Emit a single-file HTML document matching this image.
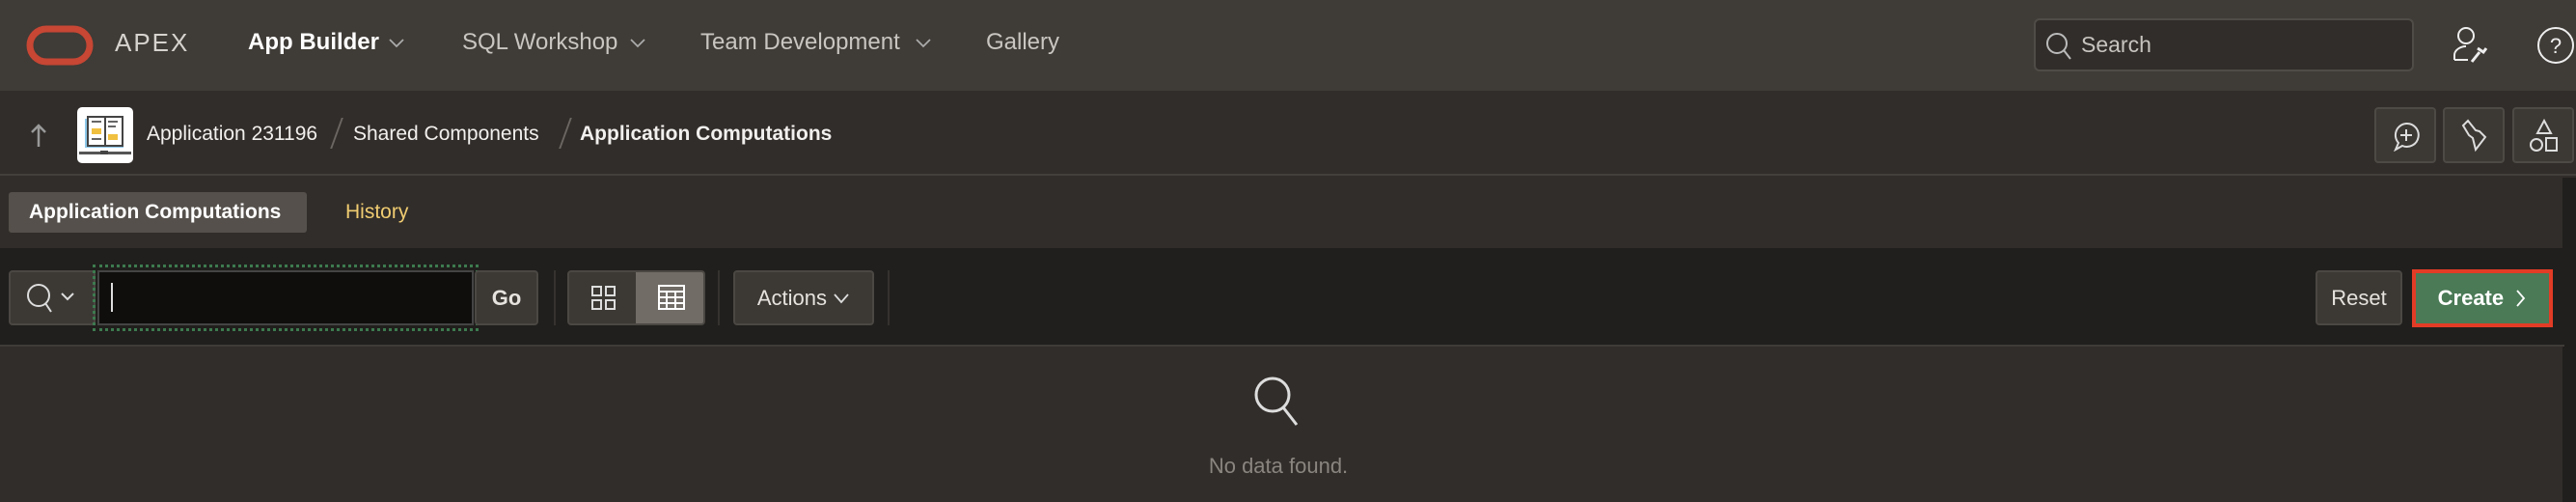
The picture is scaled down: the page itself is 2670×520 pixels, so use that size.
<!DOCTYPE html>
<html><head><meta charset="utf-8"><style>
*{box-sizing:border-box;margin:0;padding:0}
body{width:2670px;height:520px;overflow:hidden;background:#312d2a;font-family:"Liberation Sans",sans-serif;position:relative}
.a{position:absolute}
.top{left:0;top:0;width:2670px;height:94px;background:#3f3b36}
.nav{top:30px;font-size:24px;color:#c9c5c0;white-space:nowrap}
.chev{top:36px}
.bc{left:0;top:94px;width:2670px;height:88px;background:#312d2a;border-bottom:2px solid #433f3b}
.bct{top:127px;font-size:21px;color:#f2f0ee;white-space:nowrap}
.slash{top:122px;width:2px;height:32px;background:#6b6661;transform:skewX(-20deg)}
.ib{width:64px;height:58px;top:111px;border:2px solid #4d4944;border-radius:4px;background:#3c3834}
.tb{left:0;top:257px;width:2658px;height:102px;background:#201f1d;border-bottom:2px solid #3f3b37}
.btn{top:280px;height:57px;background:#3c3935;border:2px solid #4b4743;border-radius:4px;color:#e6e3df;font-size:22px;display:flex;align-items:center;justify-content:center}
.sep{top:280px;width:2px;height:57px;background:#35322f}
</style></head><body>
<div class="a top"></div>
<svg class="a" style="left:27px;top:26px" width="70" height="42"><rect x="4" y="4" width="62" height="34" rx="17" fill="none" stroke="#c74634" stroke-width="7"/></svg>
<div class="a nav" style="left:119px;color:#d6d3cf;font-size:26px;letter-spacing:2px;top:29px">APEX</div>
<div class="a nav" style="left:257px;color:#fff;font-weight:bold">App Builder</div>
<svg class="a chev" style="left:402px" width="18" height="18"><path d="M2 5l7 7 7-7" fill="none" stroke="#aaa" stroke-width="1.8"/></svg>
<div class="a nav" style="left:479px">SQL Workshop</div>
<svg class="a chev" style="left:652px" width="18" height="18"><path d="M2 5l7 7 7-7" fill="none" stroke="#aaa" stroke-width="1.8"/></svg>
<div class="a nav" style="left:726px">Team Development</div>
<svg class="a chev" style="left:948px" width="18" height="18"><path d="M2 5l7 7 7-7" fill="none" stroke="#aaa" stroke-width="1.8"/></svg>
<div class="a nav" style="left:1022px">Gallery</div>
<div class="a" style="left:2108px;top:19px;width:394px;height:55px;background:#312d2a;border:2px solid #4f4b46;border-radius:6px"></div>
<svg class="a" style="left:2118px;top:31px" width="34" height="34"><circle cx="14" cy="14" r="10" fill="none" stroke="#bbb" stroke-width="2"/><path d="M21 21l7 9" stroke="#bbb" stroke-width="2"/></svg>
<div class="a" style="left:2157px;top:33px;font-size:23px;color:#c7c3bf">Search</div>
<svg class="a" style="left:2540px;top:26px" width="40" height="40"><circle cx="16" cy="11" r="8" fill="none" stroke="#eee" stroke-width="2"/><path d="M4 36v-5c0-5 6-9 12-9M4 36h14" fill="none" stroke="#eee" stroke-width="2"/><path d="M22 38l8-10M28 24l6 4 3-4" fill="none" stroke="#eee" stroke-width="3"/></svg>
<svg class="a" style="left:2628px;top:26px" width="42" height="42"><circle cx="21" cy="21" r="18" fill="none" stroke="#eee" stroke-width="2"/><text x="21" y="29" font-size="22" fill="#eee" text-anchor="middle" font-family="Liberation Sans">?</text></svg>

<div class="a bc"></div>
<svg class="a" style="left:30px;top:126px" width="20" height="28"><path d="M10 26V4M3 11l7-7 7 7" fill="none" stroke="#999" stroke-width="2.5"/></svg>
<svg class="a" style="left:80px;top:111px" width="58" height="58"><rect width="58" height="58" rx="5" fill="#fff"/><rect x="8" y="12" width="40" height="30" fill="#8ec9ea"/><rect x="11" y="10" width="36" height="30" fill="#fff" stroke="#444" stroke-width="2"/><line x1="29" y1="10" x2="29" y2="40" stroke="#444" stroke-width="2"/><rect x="15" y="22" width="10" height="6" fill="#f0c040"/><rect x="32" y="28" width="10" height="6" fill="#f0c040"/><path d="M15 15h10M32 15h10M32 20h8M15 33h10" stroke="#666" stroke-width="2"/><rect x="2" y="46" width="54" height="3" fill="#555"/><rect x="24" y="45" width="8" height="4" fill="#444"/></svg>
<div class="a bct" style="left:152px">Application 231196</div>
<div class="a slash" style="left:348px"></div>
<div class="a bct" style="left:366px">Shared Components</div>
<div class="a slash" style="left:585px"></div>
<div class="a bct" style="left:601px;font-weight:bold">Application Computations</div>
<div class="a ib" style="left:2461px"></div>
<svg class="a" style="left:2478px;top:125px" width="32" height="32"><path d="M16 3a12 12 0 1 1-4 23l-7 4 3-7A12 12 0 0 1 16 3z" fill="none" stroke="#ddd" stroke-width="2"/><path d="M16 9v12M10 15h12" stroke="#ddd" stroke-width="2"/></svg>
<div class="a ib" style="left:2532px"></div>
<svg class="a" style="left:2550px;top:123px" width="30" height="36"><path d="M3 7l5-5 8 10 4 1 6 6-10 13-3-12-4-3z" fill="none" stroke="#ddd" stroke-width="2"/></svg>
<div class="a ib" style="left:2604px"></div>
<svg class="a" style="left:2620px;top:123px" width="34" height="36"><path d="M17 2l7 13H10z" fill="none" stroke="#ddd" stroke-width="2"/><circle cx="9" cy="27" r="6" fill="none" stroke="#ddd" stroke-width="2"/><rect x="19" y="20" width="11" height="13" fill="none" stroke="#ddd" stroke-width="2"/></svg>

<div class="a" style="left:9px;top:199px;width:309px;height:42px;background:#55504b;border-radius:3px"></div>
<div class="a" style="left:30px;top:208px;font-size:21px;font-weight:bold;color:#fff">Application Computations</div>
<div class="a" style="left:358px;top:208px;font-size:21px;color:#f0cc71">History</div>
<div class="a" style="left:2656px;top:184px;width:14px;height:336px;background:#201f1d"></div>

<div class="a tb"></div>
<div class="a btn" style="left:9px;width:90px"></div>
<svg class="a" style="left:26px;top:292px" width="56" height="36"><circle cx="14" cy="14" r="11" fill="none" stroke="#ddd" stroke-width="2"/><path d="M21 22l6 9M38 12l6 6 6-6" fill="none" stroke="#ddd" stroke-width="2"/></svg>
<div class="a" style="left:96px;top:274px;width:400px;height:69px;border:3px dotted #3d7a4f"></div>
<div class="a" style="left:101px;top:280px;width:390px;height:57px;background:#0f0e0d;border:2px solid #444"></div>
<div class="a" style="left:115px;top:293px;width:2px;height:30px;background:#ddd"></div>
<div class="a btn" style="left:492px;width:66px;font-weight:bold">Go</div>
<div class="a sep" style="left:574px"></div>
<div class="a btn" style="left:588px;width:143px;overflow:hidden;justify-content:flex-start"><div style="width:71px"></div><div style="width:72px;height:57px;background:#716c66"></div></div>
<svg class="a" style="left:612px;top:295px" width="28" height="28"><rect x="2" y="2" width="9" height="9" fill="none" stroke="#ddd" stroke-width="2"/><rect x="16" y="2" width="9" height="9" fill="none" stroke="#ddd" stroke-width="2"/><rect x="2" y="16" width="9" height="9" fill="none" stroke="#ddd" stroke-width="2"/><rect x="16" y="16" width="9" height="9" fill="none" stroke="#ddd" stroke-width="2"/></svg>
<svg class="a" style="left:681px;top:294px" width="30" height="30"><rect x="2" y="2" width="26" height="24" fill="none" stroke="#fff" stroke-width="2"/><path d="M2 8h26M2 14h26M2 20h26M10 8v18M19 8v18" stroke="#fff" stroke-width="2"/></svg>
<div class="a sep" style="left:744px"></div>
<div class="a btn" style="left:760px;width:146px">Actions&nbsp;<svg width="18" height="14"><path d="M2 3l7 8 7-8" fill="none" stroke="#ddd" stroke-width="1.8"/></svg></div>
<div class="a sep" style="left:920px"></div>
<div class="a btn" style="left:2400px;width:90px">Reset</div>
<div class="a btn" style="left:2500px;width:146px;background:#4a7a56;border:4px solid #e33c26;border-radius:0;color:#fff;font-weight:bold;height:60px;top:279px">Create&nbsp;&nbsp;<svg width="12" height="20"><path d="M2 2l7 8-7 8" fill="none" stroke="#fff" stroke-width="1.8"/></svg></div>

<svg class="a" style="left:1294px;top:384px" width="64" height="64"><circle cx="25" cy="25" r="17" fill="none" stroke="#ddd" stroke-width="3"/><path d="M36 38l14 18" stroke="#ddd" stroke-width="3"/></svg>
<div class="a" style="left:1175px;width:300px;text-align:center;top:470px;font-size:22px;color:#8a857f">No data found.</div>
</body></html>
